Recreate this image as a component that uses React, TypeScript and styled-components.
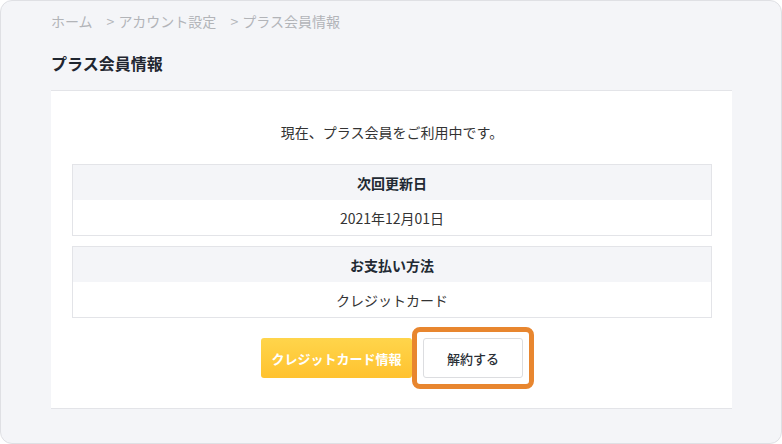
import styled, { createGlobalStyle } from "styled-components";

const GlobalStyle = createGlobalStyle`
  html, body {
    margin: 0;
    padding: 0;
    background: #ffffff;
  }
  * {
    box-sizing: border-box;
  }
  body {
    font-family: "Noto Sans CJK JP", "Noto Sans", sans-serif;
    color: #333333;
  }
`;

const Frame = styled.div`
  width: 782px;
  height: 444px;
  border: 1px solid #dfe0e4;
  border-radius: 12px;
  background-color: #f4f5f8;
  padding: 10px 49px 0 50px;
  overflow: hidden;
`;

const Breadcrumb = styled.nav`
  display: flex;
  align-items: center;
  height: 20px;
  font-size: 14px;
  line-height: 20px;
  color: #b2b4b8;

  .sep {
    margin: 0 4px 0 14px;
  }
`;

const PageTitle = styled.h1`
  margin: 20px 0 15px;
  font-size: 16px;
  line-height: 24px;
  font-weight: 700;
  color: #1f2630;
`;

const Card = styled.section`
  background-color: #ffffff;
  border-top: 1px solid #e3e4e8;
  border-bottom: 1px solid #e3e4e8;
  padding: 31px 20px 30px 21px;
`;

const Message = styled.p`
  margin: 0 0 22px;
  text-align: center;
  font-size: 14px;
  line-height: 20px;
  color: #333;
`;

const InfoTable = styled.div`
  border: 1px solid #e3e4e8;
  margin-bottom: 10px;
`;

const InfoRow = styled.div<{ $head?: boolean }>`
  height: 35px;
  display: flex;
  align-items: center;
  justify-content: center;
  font-size: 14px;
  font-weight: ${(p) => (p.$head ? 700 : 400)};
  color: ${(p) => (p.$head ? "#222a33" : "#333")};
  background-color: ${(p) => (p.$head ? "#f4f5f8" : "#ffffff")};
`;

const Actions = styled.div`
  display: flex;
  justify-content: center;
  gap: 11px;
  margin-top: 20px;
`;

const Button = styled.button<{ $primary?: boolean }>`
  height: 40px;
  width: ${(p) => (p.$primary ? "151px" : "100px")};
  border-radius: 3px;
  font-family: inherit;
  font-size: 13px;
  cursor: pointer;
  border: ${(p) => (p.$primary ? "none" : "1px solid #dcdde0")};
  color: ${(p) => (p.$primary ? "#ffffff" : "#2a2f36")};
  font-weight: ${(p) => (p.$primary ? 700 : 500)};
  background: ${(p) =>
    p.$primary ? "linear-gradient(#ffd54b, #ffc22f)" : "#ffffff"};
`;

const Highlight = styled.div`
  position: relative;

  &::after {
    content: "";
    position: absolute;
    inset: -11px;
    border: 5px solid #e8862f;
    border-radius: 8px;
    pointer-events: none;
  }
`;

const rows = [
  { label: "次回更新日", value: "2021年12月01日" },
  { label: "お支払い方法", value: "クレジットカード" },
];

export default function App() {
  return (
    <>
      <GlobalStyle />
      <Frame>
        <Breadcrumb>
          <span>ホーム</span>
          <span className="sep">&gt;</span>
          <span>アカウント設定</span>
          <span className="sep">&gt;</span>
          <span>プラス会員情報</span>
        </Breadcrumb>
        <PageTitle>プラス会員情報</PageTitle>
        <Card>
          <Message>現在、プラス会員をご利用中です。</Message>
          {rows.map((r) => (
            <InfoTable key={r.label}>
              <InfoRow $head>{r.label}</InfoRow>
              <InfoRow>{r.value}</InfoRow>
            </InfoTable>
          ))}
          <Actions>
            <Button $primary>クレジットカード情報</Button>
            <Highlight>
              <Button>解約する</Button>
            </Highlight>
          </Actions>
        </Card>
      </Frame>
    </>
  );
}
